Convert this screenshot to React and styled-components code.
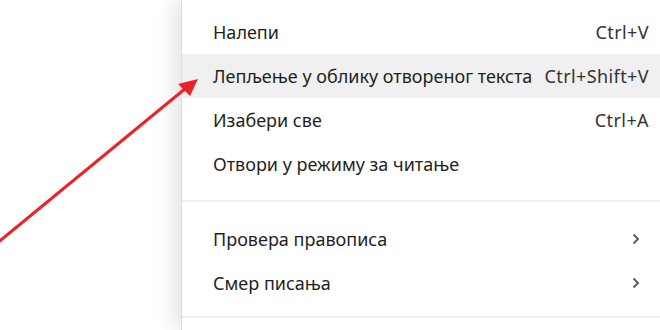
import React from "react";
import styled, { createGlobalStyle } from "styled-components";

const GlobalStyle = createGlobalStyle`
  html, body {
    margin: 0;
    padding: 0;
    background: #ffffff;
    overflow: hidden;
  }
  body {
    font-family: "Noto Sans", "Open Sans", sans-serif;
  }
`;

const Page = styled.div`
  position: relative;
  width: 660px;
  height: 330px;
  display: flex;
  overflow: hidden;
`;

const Backdrop = styled.div`
  width: 181px;
  flex-shrink: 0;
`;

const Menu = styled.div`
  flex: 1;
  background: #ffffff;
  border-left: 1px solid #dcdcdc;
  box-shadow: -8px 0 18px rgba(0, 0, 0, 0.1);
  display: flex;
  flex-direction: column;
`;

const Group = styled.div`
  padding-top: ${(p) => p.$top}px;
  padding-bottom: ${(p) => p.$bottom}px;
`;

const Item = styled.div`
  height: 44px;
  display: flex;
  align-items: center;
  justify-content: space-between;
  gap: 10px;
  padding: 0 11px 0 31px;
  background: ${(p) => (p.$active ? "#f0f0f0" : "transparent")};
  color: #1f1f1f;
  font-size: 18px;
`;

const Label = styled.span`
  white-space: nowrap;
`;

const Shortcut = styled.span`
  color: #333333;
  letter-spacing: 0.4px;
  white-space: nowrap;
`;

const Chevron = styled.svg`
  width: 8px;
  height: 12px;
  margin-right: 9px;
`;

const Separator = styled.div`
  height: 2px;
  background: #edf1fb;
`;

const Overlay = styled.svg`
  position: absolute;
  left: 0;
  top: 0;
  pointer-events: none;
`;

function ChevronIcon() {
  return (
    <Chevron viewBox="0 0 8 12">
      <path d="M1.5 1.5 L6 6 L1.5 10.5" fill="none" stroke="#5a5a5a" strokeWidth="1.9" />
    </Chevron>
  );
}

export default function App() {
  return (
    <>
      <GlobalStyle />
      <Page>
        <Backdrop />
        <Menu>
          <Group $top={10} $bottom={14}>
            <Item>
              <Label>Налепи</Label>
              <Shortcut>Ctrl+V</Shortcut>
            </Item>
            <Item $active>
              <Label>Лепљење у облику отвореног текста</Label>
              <Shortcut>Ctrl+Shift+V</Shortcut>
            </Item>
            <Item>
              <Label>Изабери све</Label>
              <Shortcut>Ctrl+A</Shortcut>
            </Item>
            <Item>
              <Label>Отвори у режиму за читање</Label>
            </Item>
          </Group>
          <Separator />
          <Group $top={15} $bottom={11}>
            <Item>
              <Label>Провера правописа</Label>
              <ChevronIcon />
            </Item>
            <Item>
              <Label>Смер писања</Label>
              <ChevronIcon />
            </Item>
          </Group>
          <Separator />
        </Menu>
        <Overlay width="660" height="330" viewBox="0 0 660 330">
          <line x1="-4" y1="244" x2="186" y2="88" stroke="#ec2227" strokeWidth="3" />
          <polygon points="198,79 178,84 190,96" fill="#ec2227" />
        </Overlay>
      </Page>
    </>
  );
}
